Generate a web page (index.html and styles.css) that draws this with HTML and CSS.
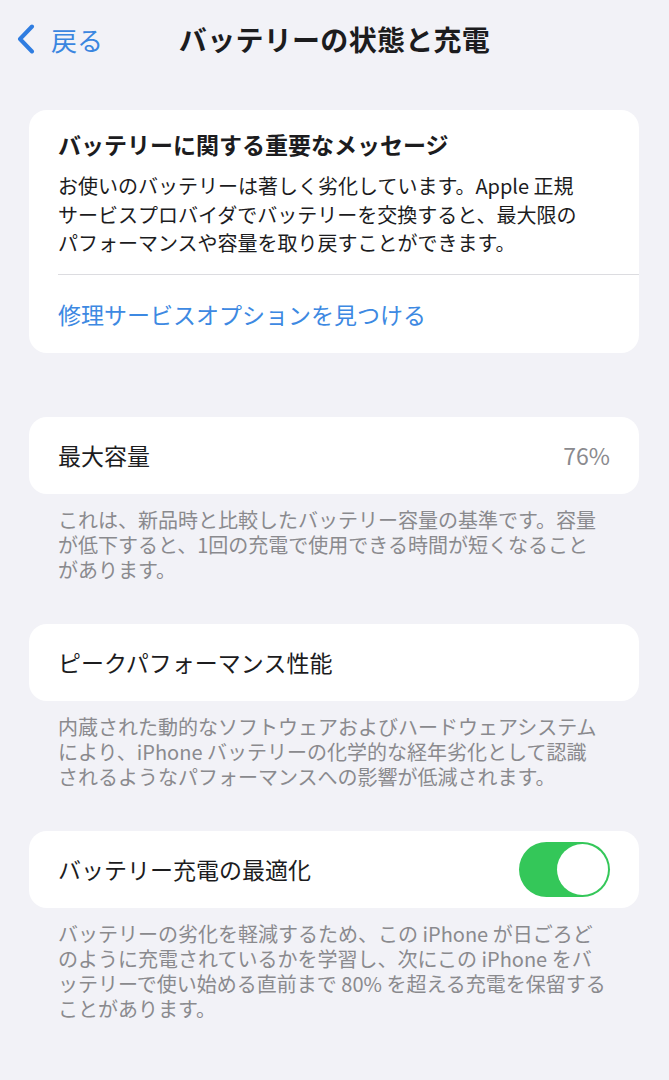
FILE: index.html
```html
<!DOCTYPE html>
<html lang="ja">
<head>
    <meta charset="UTF-8">
    <meta name="viewport" content="width=device-width, initial-scale=1.0">
    <title>バッテリーの状態と充電</title>
    <link rel="stylesheet" href="styles.css">
</head>
<body>

<div id="nav-bar">
    <div id="back-button">
        <svg class="chevron" viewBox="0 0 22 30" width="22" height="30">
            <path d="M17 2.5 L5 15 L17 27.5" fill="none" stroke="#2f7de1" stroke-width="4" stroke-linecap="round" stroke-linejoin="round"/>
        </svg>
        <span>戻る</span>
    </div>
    <div id="nav-title">バッテリーの状態と充電</div>
    <div></div>
</div>

<div id="content">
    <div class="card message-card">
        <div class="message-body">
            <div class="message-title">バッテリーに関する重要なメッセージ</div>
            <div class="message-text">お使いのバッテリーは著しく劣化しています。Apple 正規<br>サービスプロバイダでバッテリーを交換すると、最大限の<br>パフォーマンスや容量を取り戻すことができます。</div>
        </div>
        <div class="message-link">修理サービスオプションを見つける</div>
    </div>

    <div class="card row">
        <span class="row-label">最大容量</span>
        <span class="row-value">76%</span>
    </div>
    <div class="footnote">これは、新品時と比較したバッテリー容量の基準です。容量<br>が低下すると、1回の充電で使用できる時間が短くなること<br>があります。</div>

    <div class="card row">
        <span class="row-label">ピークパフォーマンス性能</span>
    </div>
    <div class="footnote">内蔵された動的なソフトウェアおよびハードウェアシステム<br>により、iPhone バッテリーの化学的な経年劣化として認識<br>されるようなパフォーマンスへの影響が低減されます。</div>

    <div class="card row">
        <span class="row-label">バッテリー充電の最適化</span>
        <div class="toggle on"><div class="knob"></div></div>
    </div>
    <div class="footnote">バッテリーの劣化を軽減するため、この iPhone が日ごろど<br>のように充電されているかを学習し、次にこの iPhone をバ<br>ッテリーで使い始める直前まで 80% を超える充電を保留する<br>ことがあります。</div>
</div>

</body>
</html>
```

FILE: styles.css
```css
body {
    font-family: "Noto Sans CJK JP", "Noto Sans", sans-serif;
    margin: 0;
    background-color: #f2f2f7;
    color: #1c1c1e;
}
#nav-bar {
    display: grid;
    grid-template-columns: 1fr auto 1fr;
    align-items: center;
    height: 78px;
}
#back-button {
    display: flex;
    align-items: center;
    padding-left: 15px;
    color: #3a86e0;
    font-size: 26px;
}
#back-button .chevron {
    margin-right: 14px;
}
#nav-title {
    font-size: 28px;
    font-weight: 700;
    letter-spacing: 0.3px;
}
#content {
    padding: 32px 30px 40px 29px;
}
.card {
    background-color: #ffffff;
    border-radius: 18px;
}
.message-card {
    padding-left: 29px;
    margin-bottom: 64px;
}
.message-body {
    padding: 18px 29px 16px 0;
    border-bottom: 1px solid #dcdce0;
}
.message-title {
    font-size: 23px;
    font-weight: 700;
    line-height: 32px;
    margin-bottom: 12px;
}
.message-text {
    font-size: 20px;
    line-height: 28.5px;
    white-space: nowrap;
}
.message-link {
    height: 78px;
    display: flex;
    align-items: center;
    color: #3d89e2;
    font-size: 23px;
}
.row {
    display: flex;
    align-items: center;
    justify-content: space-between;
    height: 77px;
    padding: 0 29px;
}
.row-label {
    font-size: 23px;
}
.row-value {
    font-size: 23px;
    color: #8a8a8e;
}
.footnote {
    margin: 13px 0 42px 29px;
    font-size: 20px;
    line-height: 25px;
    color: #8a8a8e;
    white-space: nowrap;
}
.toggle {
    width: 91px;
    height: 55px;
    border-radius: 28px;
    background-color: #34c759;
    display: flex;
    align-items: center;
    justify-content: flex-end;
    padding: 0 2px;
    box-sizing: border-box;
}
.knob {
    width: 51px;
    height: 51px;
    border-radius: 50%;
    background-color: #ffffff;
}
```
